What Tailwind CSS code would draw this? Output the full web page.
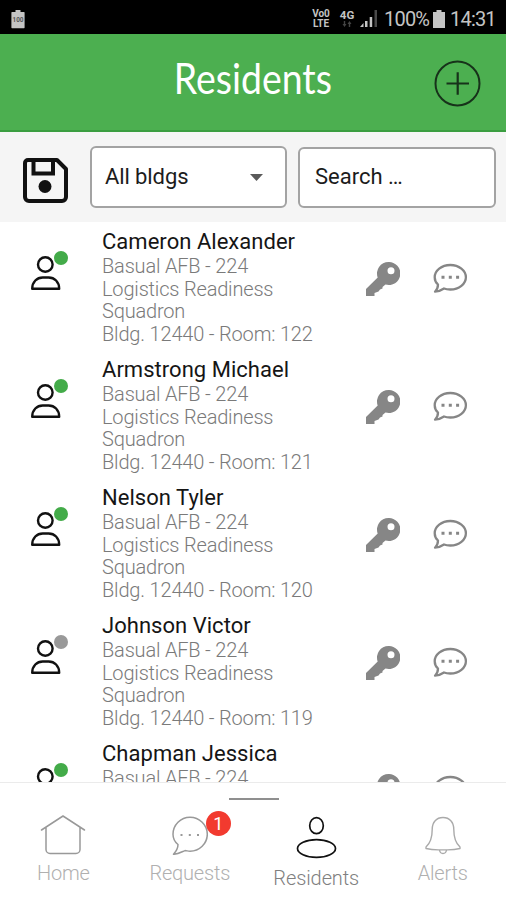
<!DOCTYPE html>
<html lang="en">
<head>
  <meta charset="UTF-8" />
  <meta name="viewport" content="width=device-width, initial-scale=1.0" />
  <title>Residents</title>
  <script src="https://cdn.jsdelivr.net/npm/@tailwindcss/browser@4"></script>
</head>
<body class="bg-white font-[Roboto,sans-serif]">
  <div class="w-[506px] h-[900px] flex flex-col overflow-hidden">

    <!-- Status bar -->
    <div class="h-[34px] shrink-0 bg-black text-[#c4c4c4] flex items-center pl-[11px] pr-[10px] pt-[3px]">
      <svg class="w-[14px] h-[20px]" viewBox="0 0 14 20">
        <path d="M4.500 1h5v2H13a.6.6 0 0 1 .6.6v15a.6.6 0 0 1-.6.6H1a.6.6 0 0 1-.6-.6v-15A.6.6 0 0 1 1 3h3.500z" fill="#c4c4c4" />
        <text x="7" y="13" text-anchor="middle" font-size="6.500" font-weight="700" fill="#555" textLength="11" lengthAdjust="spacingAndGlyphs">100</text>
      </svg>
      <div class="ml-auto flex items-center">
        <div class="w-[18px] flex flex-col items-center text-[10px] leading-[10px] font-bold">
          <span>Vo0</span>
          <span>LTE</span>
        </div>
        <div class="ml-[9px] w-[16px] flex flex-col items-center">
          <span class="text-[11.500px] leading-[11px] font-bold">4G</span>
          <svg class="w-[10px] h-[6px]" viewBox="0 0 10 6" fill="#444"><path d="M2.500 6 .5 3h1.300V0h1.400v3h1.300zM7.500 0l2 3H8.200v3H6.800V3H5.500z" /></svg>
        </div>
        <svg class="ml-[5px] w-[18px] h-[17px]" viewBox="0 0 18 17" fill="#c4c4c4">
          <path d="M0 17l3.500-4v4zM5 11h2.500v6H5zM9.700 7h2.500v10H9.700z" />
          <path d="M14.500 0H17v17h-2.500z" fill="#4a4a4a" />
        </svg>
        <span class="ml-[6px] w-[44px] text-[20px] leading-5 tracking-[-0.8px] whitespace-nowrap">100%</span>
        <svg class="ml-[5px] w-[12px] h-[18px]" viewBox="0 0 12 18" fill="#c4c4c4"><path d="M3.500 0h5v2H12v16H0V2h3.500z" /></svg>
        <span class="ml-[5px] w-[46px] text-[20px] leading-5 tracking-[-0.8px] whitespace-nowrap">14:31</span>
      </div>
    </div>

    <!-- Header -->
    <header class="h-[98px] shrink-0 bg-[#4caf50] border-b-2 border-[#3b9e41] grid grid-cols-[1fr_auto_1fr] items-center pr-[25px] pl-[25px]">
      <h1 class="col-start-2 w-[157px] flex justify-center text-white text-[43px] leading-[60px] -mt-[8px] font-[Lato,sans-serif]"><span class="inline-block scale-x-[0.87]">Residents</span></h1>
      <button class="justify-self-end mt-[2px]">
        <svg class="w-[47px] h-[47px]" viewBox="0 0 47 47" fill="none" stroke="#17321a">
          <circle cx="23.500" cy="23.500" r="22" stroke-width="2" />
          <path d="M12.500 23.500h22.500M23.700 12.200v22.500" stroke-width="2.200" />
        </svg>
      </button>
    </header>

    <!-- Filters -->
    <div class="h-[90px] shrink-0 bg-[#f5f5f5] flex items-center pl-[23px] pr-[10px]">
      <svg class="w-[45px] h-[45px] mt-[7px]" viewBox="0 0 45 45" fill="none" stroke="#111" stroke-width="4">
        <path d="M5 2h29l9 9v28a4 4 0 0 1-4 4H6a4 4 0 0 1-4-4V5a3 3 0 0 1 3-3z" stroke-linejoin="round" />
        <path d="M10.500 2v13.500h19.500V2" />
        <circle cx="22" cy="28.500" r="6.500" fill="#111" stroke="none" />
      </svg>
      <button class="ml-[22px] w-[197px] h-[62px] bg-white border-2 border-[#a3a3a3] rounded-[6px] flex items-center pl-[13px] pr-[22px] text-[22px] text-[#1c1c1c] font-normal">
        <span class="-mt-px tracking-[-0.1px]">All bldgs</span>
        <svg class="ml-auto w-[13px] h-[7px]" viewBox="0 0 13 7"><path d="M0 0h13L6.500 7z" fill="#5a5a5a" /></svg>
      </button>
      <input type="text" placeholder="Search …" class="ml-[11px] w-[198px] h-[61px] bg-white border-2 border-[#a3a3a3] rounded-[6px] pl-[15px] pb-px text-[22px] placeholder:text-[#1c1c1c]" />
    </div>

    <!-- Residents list -->
    <ul id="residentList" class="flex-1 min-h-0 overflow-hidden pt-px"></ul>

    <!-- Bottom navigation -->
    <nav class="h-[118px] shrink-0 border-t border-[#ebebeb] bg-white flex flex-col text-[#b0b0b0] font-light">
      <div class="mt-[15px] ml-[229px] w-[50px] h-[2px] bg-[#8f8f8f]"></div>
      <div class="grid grid-cols-4 text-[20px] leading-6 pt-px">
        <a href="#" class="flex flex-col items-center">
          <svg class="mt-[12px] w-[46px] h-[42px]" viewBox="0 0 46 42" fill="none" stroke="#999" stroke-width="1.500" stroke-linecap="round" stroke-linejoin="round">
            <path d="M1.500 17 23 3l21.500 14M6 14v22.500a4 4 0 0 0 4 4h26a4 4 0 0 0 4-4V14" />
          </svg>
          <span class="mt-[6px] tracking-[-0.2px]">Home</span>
        </a>
        <a href="#" class="flex flex-col items-center">
          <div class="relative mt-[12px] w-[36px] h-[42px]">
            <svg class="w-[36px] h-[42px]" viewBox="0 0 36 42" fill="none" stroke="#999" stroke-width="1.500" stroke-linejoin="round">
              <path d="M6 31.500C2.800 29 1 25.300 1 21.300 1 12 8.600 4.200 18 4.200s17.300 7.800 17.300 17.100S27.400 38.200 18 38.200c-2 0-3.500-.6-5-.6-3 1-6 3.500-11.500 3.700 2.500-2.800 4.500-5.500 4.500-9.800z" />
              <path d="M8.500 22h2M16.800 22h2M25 22h2" stroke-width="2" />
            </svg>
            <span class="absolute left-[34px] -top-[2px] w-[25px] h-[25px] rounded-full bg-[#f23a2f] text-white text-[18px] leading-[25px] text-center font-normal">1</span>
          </div>
          <span class="mt-[6px] tracking-[-0.2px]">Requests</span>
        </a>
        <a href="#" class="flex flex-col items-center text-[#808080]">
          <svg class="mt-[15px] w-[42px] h-[44px]" viewBox="0 0 42 44" fill="none" stroke="#111" stroke-width="1.700">
            <ellipse cx="21.500" cy="9.700" rx="6.800" ry="8" />
            <ellipse cx="21.500" cy="32.500" rx="19" ry="8.800" />
          </svg>
          <span class="mt-[6px] tracking-[-0.1px]">Residents</span>
        </a>
        <a href="#" class="flex flex-col items-center">
          <svg class="mt-[14px] w-[36px] h-[40px]" viewBox="0 0 36 40" fill="none" stroke="#aaa" stroke-width="1.400" stroke-linejoin="round">
            <path d="M1 32c4-3.500 6.200-8.500 6.200-17.500C7.200 7 11.500 2.500 18 2.500s10.800 4.500 10.800 12c0 9 2.200 14 6.200 17.500v1.500c-4 .8-8 1.200-12.500 1.400h-9C9 34.700 5 34.300 1 33.500z" />
            <path d="M14.500 35c.3 2.200 1.500 3.500 3.500 3.500s3.200-1.300 3.500-3.500" />
          </svg>
          <span class="mt-[6px] tracking-[-0.2px]">Alerts</span>
        </a>
      </div>
    </nav>
  </div>

  <script>
    const residents = [
      { name: 'Cameron Alexander', room: 122, online: true },
      { name: 'Armstrong Michael', room: 121, online: true },
      { name: 'Nelson Tyler', room: 120, online: true },
      { name: 'Johnson Victor', room: 119, online: false },
      { name: 'Chapman Jessica', room: 118, online: true },
    ];

    const residentList = document.getElementById('residentList');

    residentList.innerHTML = residents.map((r) => `
      <li class="h-[128px] flex items-start">
        <div class="relative ml-[30px] mt-[32px] w-[32px] h-[36px]">
          <svg class="w-[32px] h-[36px]" viewBox="0 0 32 36" fill="none" stroke="#111" stroke-width="2.400">
            <circle cx="15.300" cy="9.500" r="7.300" />
            <path d="M2.200 33.800c0-7 4.800-11.300 10.500-11.300h6c5.700 0 10.500 4.300 10.500 11.300z" stroke-linejoin="round" />
          </svg>
          <span class="absolute left-[24px] -top-[4px] w-[14px] h-[14px] rounded-full ${r.online ? 'bg-[#43ab49]' : 'bg-[#999]'}"></span>
        </div>
        <div class="ml-[40px] mt-[6px] w-[230px]">
          <h2 class="text-[22px] leading-[26px] text-[#151515] whitespace-nowrap tracking-[0.03px]">${r.name}</h2>
          <p class="text-[20px] leading-[22.500px] tracking-[-0.18px] font-light text-[#7a7a7a]">
            Basual AFB - 224<br />
            Logistics Readiness<br />
            Squadron<br />
            Bldg. 12440 - Room: ${r.room}
          </p>
        </div>
        <svg class="ml-[34px] mt-[39px] w-[34px] h-[34px]" viewBox="0 0 34 34">
          <path fill="#868686" fill-rule="evenodd" d="M22.500 0A11.500 11.500 0 1 1 19.500 22.500L16.500 25V26.500L14 27.500L12.500 29.500L8.500 31V34H0V27L11.700 15.500A11.500 11.500 0 0 1 22.500 0zM25 5.300a3.500 3.500 0 1 0 0 7 3.500 3.500 0 0 0 0-7z" />
        </svg>
        <svg class="ml-[32px] mt-[40px] w-[36px] h-[32px]" viewBox="0 0 36 32" fill="none" stroke="#868686" stroke-width="2.300" stroke-linejoin="round">
          <path d="M6 21.500C3.800 19.500 2.700 17 2.700 14.200 2.700 7.500 9.500 2 18.300 2s15.600 5.500 15.600 12.200-6.800 12.300-15.600 12.300c-2.500 0-4.500-.3-6.300-1-2.500 1.700-5 3-9 3.200 2-2 3-4.500 3-7.200z" />
          <path d="M9.500 14.200h3M16.800 14.200h3M24.100 14.200h3" stroke-width="3" />
        </svg>
      </li>
    `).join('');
  </script>
</body>
</html>
